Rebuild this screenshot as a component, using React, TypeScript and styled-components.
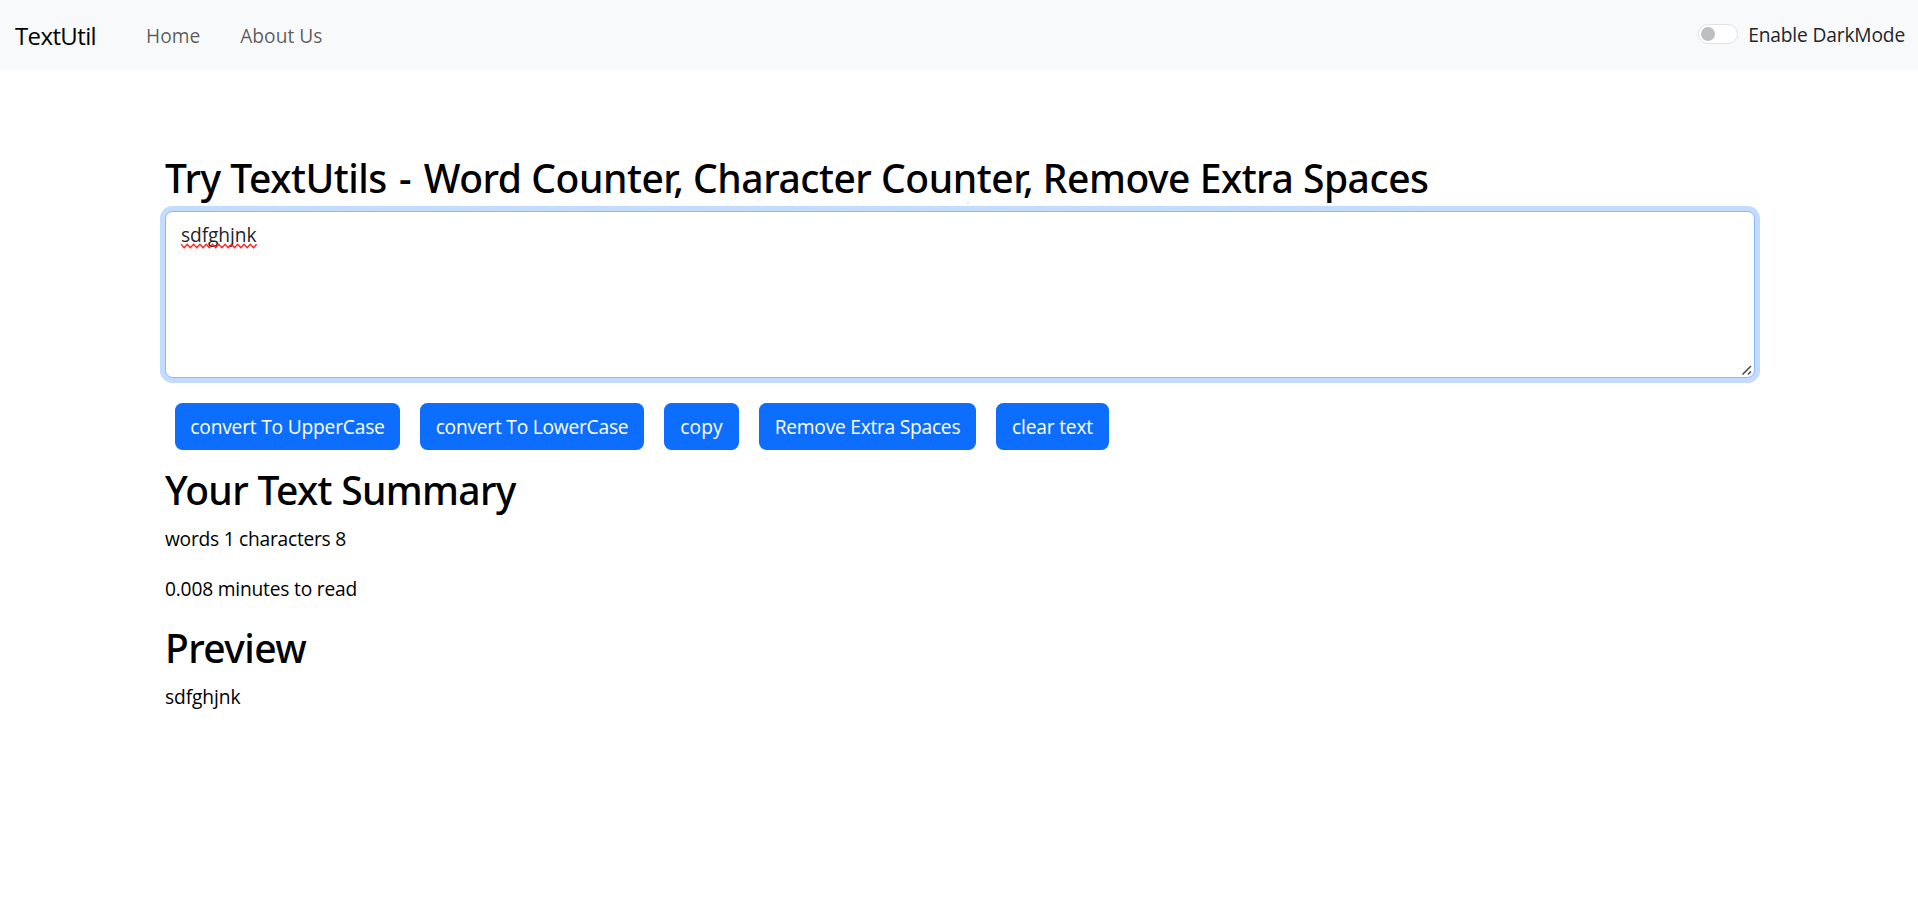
import React, { useState } from 'react';
import styled, { createGlobalStyle } from 'styled-components';

const GlobalStyle = createGlobalStyle`
  *, *::before, *::after { box-sizing: border-box; }
  body {
    margin: 0;
    background: #fff;
    color: #000;
    font-family: "Segoe UI", "Open Sans", "Noto Sans", sans-serif;
    font-size: 19.2px;
    line-height: 30px;
  }
`;

type Tracked = { $tracking?: number };

const Navbar = styled.nav`
  display: flex;
  align-items: center;
  height: 70px;
  padding: 0 13px 0 15px;
  background: #f8f9fa;
`;

const Brand = styled.a`
  width: 84px;
  margin-right: 47px;
  padding-top: 2px;
  color: #000;
  font-size: 24px;
  letter-spacing: -0.62px;
  white-space: nowrap;
  text-decoration: none;
`;

const NavLinks = styled.div`
  display: flex;
  flex: 1;
  gap: 40px;
  padding-top: 2px;
`;

const NavLink = styled.a`
  color: rgba(0, 0, 0, 0.65);
  text-decoration: none;
  white-space: nowrap;
`;

const ModeSwitch = styled.label`
  display: flex;
  align-items: center;
  gap: 10px;
  color: #212529;
  letter-spacing: -0.16px;
  white-space: nowrap;
`;

const SwitchTrack = styled.button<{ $on: boolean }>`
  display: flex;
  justify-content: ${({ $on }) => ($on ? 'flex-end' : 'flex-start')};
  align-items: center;
  width: 40px;
  height: 20px;
  margin-top: -2px;
  padding: 0 2px;
  border: 1px solid #dee2e6;
  border-radius: 20px;
  background: #fff;

  &::before {
    content: "";
    width: 14px;
    height: 14px;
    border-radius: 50%;
    background: #bfbfbf;
  }
`;

const Container = styled.main`
  width: 1590px;
  margin: 83px 0 0 165px;
`;

const Heading = styled.h1<Tracked>`
  height: 48px;
  margin: 0 0 10px;
  padding-top: 1px;
  font-family: "Segoe UI", "Noto Sans", sans-serif;
  font-size: 39px;
  font-weight: 500;
  line-height: 48px;
  letter-spacing: ${({ $tracking = 0 }) => $tracking}px;
  white-space: nowrap;
`;

const Dash = styled.span`
  padding: 0 3px 0 2.5px;
`;

const EditorWrap = styled.div`
  position: relative;
  display: flex;
`;

const Editor = styled.textarea`
  width: 100%;
  height: 167px;
  padding: 7.5px 15px;
  border: 1px solid #86b7fe;
  border-radius: 7.5px;
  outline: 0;
  box-shadow: 0 0 0 5px rgba(13, 110, 253, 0.25);
  background: #fff;
  color: #212529;
  font: inherit;
  letter-spacing: -0.1px;
  resize: vertical;

  &::-webkit-resizer {
    background: transparent;
  }
`;

const Squiggle = styled.svg`
  position: absolute;
  left: 16px;
  top: 32px;
  pointer-events: none;
`;

const Grip = styled.svg`
  position: absolute;
  right: 2px;
  bottom: 2px;
  pointer-events: none;
`;

const Actions = styled.div`
  display: flex;
  gap: 20px;
  margin: 25px 0 15px 10px;
`;

const ActionButton = styled.button<Tracked & { $width: number }>`
  width: ${({ $width }) => $width}px;
  height: 47px;
  padding: 1px 0 0;
  border: 0;
  border-radius: 7.5px;
  background: #0d6efd;
  color: #fff;
  font: inherit;
  letter-spacing: ${({ $tracking = 0 }) => $tracking}px;
  white-space: nowrap;
`;

const Paragraph = styled.p<Tracked>`
  height: 30px;
  margin: 0 0 20px;
  padding-top: 1px;
  letter-spacing: ${({ $tracking = 0 }) => $tracking}px;
`;

const INITIAL = 'sdfghjnk';

export default function App() {
  const [text, setText] = useState(INITIAL);
  const [dark, setDark] = useState(false);
  const words = text.split(/\s+/).filter(Boolean).length;

  return (
    <>
      <GlobalStyle />
      <Navbar>
        <Brand>TextUtil</Brand>
        <NavLinks>
          <NavLink>Home</NavLink>
          <NavLink>About Us</NavLink>
        </NavLinks>
        <ModeSwitch>
          <SwitchTrack type="button" $on={dark} onClick={() => setDark(!dark)} />
          Enable DarkMode
        </ModeSwitch>
      </Navbar>
      <Container>
        <Heading $tracking={-0.46}>
          Try TextUtils <Dash>-</Dash> Word Counter, Character Counter, Remove Extra Spaces
        </Heading>
        <EditorWrap>
          <Editor value={text} spellCheck={false} onChange={(e) => setText(e.target.value)} />
          {text === INITIAL && (
            <Squiggle width="77" height="6" viewBox="0 0 77 6" fill="none">
              <path
                d={'M0 1.2' + Array.from({ length: 12 }, () => 'l3.15 3.5l3.15 -3.5').join('')}
                stroke="#f22"
                strokeWidth="1.4"
              />
            </Squiggle>
          )}
          <Grip width="12" height="12" viewBox="0 0 12 12" fill="none">
            <path d="M1.5 10.5L10 2M7 10.5L10 7.5" stroke="#484848" strokeWidth="1.5" />
          </Grip>
        </EditorWrap>
        <Actions>
          <ActionButton $width={225} $tracking={-0.2} onClick={() => setText(text.toUpperCase())}>
            convert To UpperCase
          </ActionButton>
          <ActionButton $width={224} $tracking={-0.23} onClick={() => setText(text.toLowerCase())}>
            convert To LowerCase
          </ActionButton>
          <ActionButton $width={75} $tracking={0.1}>copy</ActionButton>
          <ActionButton
            $width={217}
            $tracking={-0.25}
            onClick={() => setText(text.split(/\s+/).join(' '))}
          >
            Remove Extra Spaces
          </ActionButton>
          <ActionButton $width={113} $tracking={-0.2} onClick={() => setText('')}>
            clear text
          </ActionButton>
        </Actions>
        <Heading as="h2" $tracking={-0.66}>Your Text Summary</Heading>
        <Paragraph $tracking={-0.25}>words {words} characters {text.length}</Paragraph>
        <Paragraph $tracking={-0.2}>{0.008 * words} minutes to read</Paragraph>
        <Heading as="h2" $tracking={-0.6}>Preview</Heading>
        <Paragraph $tracking={-0.1}>{text}</Paragraph>
      </Container>
    </>
  );
}
